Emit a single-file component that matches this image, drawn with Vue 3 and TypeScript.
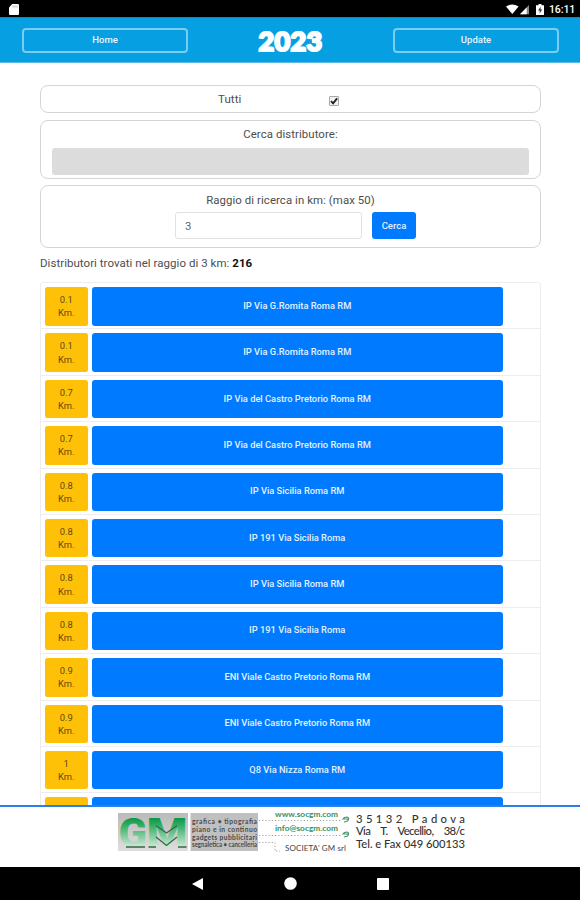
<script setup lang="ts">
import { ref } from 'vue'

interface Station {
  distance: string
  name: string
}

const showAll = ref(true)
const query = ref('')
const radius = ref('3')
const total = 216

const stations: Station[] = [
  { distance: '0.1', name: 'IP Via G.Romita Roma RM' },
  { distance: '0.1', name: 'IP Via G.Romita Roma RM' },
  { distance: '0.7', name: 'IP Via del Castro Pretorio Roma RM' },
  { distance: '0.7', name: 'IP Via del Castro Pretorio Roma RM' },
  { distance: '0.8', name: 'IP Via Sicilia Roma RM' },
  { distance: '0.8', name: 'IP 191 Via Sicilia Roma' },
  { distance: '0.8', name: 'IP Via Sicilia Roma RM' },
  { distance: '0.8', name: 'IP 191 Via Sicilia Roma' },
  { distance: '0.9', name: 'ENI Viale Castro Pretorio Roma RM' },
  { distance: '0.9', name: 'ENI Viale Castro Pretorio Roma RM' },
  { distance: '1', name: 'Q8 Via Nizza Roma RM' },
  { distance: '', name: '' },
]
</script>

<template>
  <div class="screen">
    <div class="status">
      <svg class="sd" viewBox="0 0 10 11" width="10" height="11"><path d="M3.2 0H9.2L10 .8V10.2L9.2 11H.8L0 10.2V3.4Z" fill="#fff" /><path d="M4 1.5v2M6 1.5v2M8 1.5v2" stroke="#999" stroke-width=".8" /></svg>
      <div class="status-right">
        <svg viewBox="0 0 27 11" width="27" height="11">
          <path d="M0 2.6Q6.3-1.8 12.6 2.6L6.3 10Z" fill="#fff" />
          <path d="M14 10.2L23 1V10.2Z" fill="#888" />
          <path d="M14 10.2L20.7 3.4V10.2Z" fill="#fff" />
        </svg>
        <svg class="battery" viewBox="0 0 8 11" width="8" height="11"><path d="M2.5 0h3v1.2H8V11H0V1.2h2.5Z" fill="#fff" /><path d="M4.6 2.7L2 6.5h1.7v2.8L6.2 5.5H4.6Z" fill="#333" /></svg>
        <span class="clock">16:11</span>
      </div>
    </div>

    <header class="header">
      <button class="outline" type="button">Home</button>
      <h1 class="title">2023</h1>
      <button class="outline" type="button">Update</button>
    </header>

    <main class="content">
      <label class="panel all">
        <span class="all-text">Tutti</span>
        <input v-model="showAll" class="native" type="checkbox" />
        <span class="check"><svg v-if="showAll" viewBox="0 0 8 8" width="8" height="8"><path d="M1 4.2L3.1 6.4L7.1 1.3" fill="none" stroke="#222" stroke-width="1.9" /></svg></span>
      </label>

      <section class="panel search">
        <span class="caption">Cerca distributore:</span>
        <input v-model="query" class="query" type="text" disabled />
      </section>

      <section class="panel range">
        <span class="caption">Raggio di ricerca in km: (max 50)</span>
        <div class="range-row">
          <input v-model="radius" class="radius" type="text" />
          <button class="go" type="button">Cerca</button>
        </div>
      </section>

      <p class="found">Distributori trovati nel raggio di 3 km: <b>{{ total }}</b></p>

      <ul class="list">
        <li v-for="(s, i) in stations" :key="i" class="row">
          <div class="km"><template v-if="s.distance"><span>{{ s.distance }}</span><span>Km.</span></template></div>
          <button class="station" type="button">{{ s.name }}</button>
        </li>
      </ul>
    </main>

    <footer class="footer">
      <svg class="banner" viewBox="0 0 352 54" width="352" height="54">
        <defs>
          <linearGradient id="plate" x1="0" y1="0" x2="0" y2="1">
            <stop offset="0" stop-color="#b9bab9" /><stop offset="1" stop-color="#dededc" />
          </linearGradient>
          <linearGradient id="green" gradientUnits="userSpaceOnUse" x1="0" y1="6" x2="0" y2="36">
            <stop offset="0" stop-color="#079344" /><stop offset=".25" stop-color="#2dab5f" /><stop offset="1" stop-color="#cfe9d6" />
          </linearGradient>
        </defs>
        <rect x="0" y="2" width="70" height="38" fill="url(#plate)" />
        <g class="mark">
          <text x="0.5" y="35.5" textLength="28.500" lengthAdjust="spacingAndGlyphs">G</text>
          <text x="28.500" y="35.5" textLength="41" lengthAdjust="spacingAndGlyphs">M</text>
        </g>
        <path d="M38 14.500L48.500 22L59 14.500M38 26L48.500 34.500L59 26" fill="none" stroke="#40604a" stroke-width="1.300" />
        <path d="M8 36H27M30.500 36h7.500M60 36h8.500" fill="none" stroke="#40604a" stroke-width="1.300" />
        <rect x="72.500" y="2" width="67.500" height="38" fill="#bfc0bf" />
        <g class="services">
          <text x="74" y="13" textLength="65">grafica • tipografia</text>
          <text x="74" y="21" textLength="65">piano e in continuo</text>
          <text x="74" y="29" textLength="65">gadgets pubblicitari</text>
          <text x="74" y="36.300" textLength="65" lengthAdjust="spacingAndGlyphs">segnaletica • cancelleria</text>
        </g>
        <path d="M141 9.500H224M141 24.500H224M141 31.500H157V40H162" fill="none" stroke="#858585" stroke-width=".8" stroke-dasharray="1.200 2" />
        <g class="links">
          <text x="157" y="5.800" textLength="63">www.socgm.com</text>
          <text x="157" y="20.300" textLength="63">info@socgm.com</text>
        </g>
        <path d="M230 8H225Q226 6 229 6Q232 7 229.500 10L226 11M230 23H225Q226 21 229 21Q232 22 229.500 25L226 26" fill="none" stroke="#439768" stroke-width="1.200" />
        <text class="company" x="167" y="39.800" textLength="61">SOCIETA' GM srl</text>
        <g class="address">
          <text x="238" y="11.500" textLength="109">35132 Padova</text>
          <text x="238" y="24.300" word-spacing="8" textLength="109">Via T. Vecellio, 38/c</text>
          <text x="238" y="37" textLength="109" lengthAdjust="spacingAndGlyphs">Tel. e Fax 049 600133</text>
        </g>
      </svg>
    </footer>

    <nav class="nav">
      <svg viewBox="0 0 12 12" width="12" height="12"><path d="M12 0V12L1 6Z" fill="#fff" /></svg>
      <svg viewBox="0 0 13 13" width="13" height="13"><circle cx="6.5" cy="6.5" r="6.3" fill="#fff" /></svg>
      <svg viewBox="0 0 12 12" width="12" height="12"><rect width="12" height="12" rx=".8" fill="#fff" /></svg>
    </nav>
  </div>
</template>

<style>
body {
  margin: 0;
  background: #fff;
}
</style>

<style scoped>
* {
  box-sizing: border-box;
}
.screen {
  width: 580px;
  height: 900px;
  display: flex;
  flex-direction: column;
  overflow: hidden;
  background: #fff;
  color: #4d4d4d;
  font-family: Roboto, "Liberation Sans", sans-serif;
}
button,
input {
  font-family: inherit;
  margin: 0;
  padding: 0;
}
.status {
  flex: none;
  height: 17px;
  background: #000;
  display: flex;
  justify-content: space-between;
  align-items: center;
  padding: 1px 5px 0 9px;
  color: #fff;
}
.status-right {
  display: flex;
  align-items: center;
}
.battery {
  margin: 0 5px 0 3px;
}
.clock {
  width: 26px;
  font-size: 10.5px;
  font-weight: 500;
  letter-spacing: -0.1px;
  white-space: nowrap;
}
.header {
  flex: none;
  height: 46px;
  background: #069fe1;
  border-top: 1px solid #1489bd;
  border-bottom: 1px solid #58b9e5;
  display: flex;
  justify-content: space-between;
  align-items: flex-start;
  padding: 10px 21px 0 22px;
}
.outline {
  width: 166px;
  height: 25px;
  border: 2px solid #7ccbf0;
  border-radius: 4px;
  background: transparent;
  color: #e4f5fd;
  font-size: 9.5px;
  font-weight: 500;
  line-height: 20px;
  padding-bottom: 2px;
}
.title {
  margin: 0;
  width: 66px;
  color: #fff;
  font-family: Lato, sans-serif;
  font-size: 27px;
  font-weight: 900;
  line-height: 25px;
  text-align: center;
  letter-spacing: 0.4px;
  -webkit-text-stroke: 2.2px #fff;
}
.content {
  flex: 1;
  min-height: 0;
  overflow: hidden;
  padding: 22px 39px 0 40px;
}
.panel {
  border: 1.5px solid #d5d5d5;
  border-radius: 8px;
}
.all {
  height: 28px;
  display: flex;
  align-items: center;
  padding-left: 177px;
  font-size: 11.5px;
}
.all-text {
  width: 111px;
  margin-top: -1px;
  letter-spacing: 0.1px;
}
.native {
  display: none;
}
.check {
  width: 10px;
  height: 10px;
  margin-top: 4px;
  border: 1px solid #a8a8a8;
  border-radius: 1px;
  background: #f2f2f2;
  display: flex;
}
.caption {
  font-size: 11.4px;
  line-height: 14px;
  letter-spacing: 0.08px;
}
.search {
  height: 58.5px;
  margin-top: 7px;
  padding: 6px 11px 0;
  display: flex;
  flex-direction: column;
  align-items: center;
}
.query {
  width: 100%;
  height: 27px;
  margin-top: 6.5px;
  border: 0;
  border-radius: 3px;
  background: #dcdcdc;
}
.range {
  height: 62.5px;
  margin-top: 6.5px;
  padding: 7px 0 0;
  display: flex;
  flex-direction: column;
  align-items: center;
}
.range-row {
  display: flex;
  gap: 10px;
  margin: 5px 0 0 10px;
}
.radius {
  width: 187px;
  height: 27px;
  border: 1px solid #dfe1e3;
  border-radius: 3px;
  background: #fff;
  padding-left: 9px;
  color: #666;
  font-size: 11.4px;
}
.go {
  width: 44px;
  height: 27px;
  border: 0;
  border-radius: 3px;
  background: #007bff;
  color: #e0efff;
  font-size: 9.5px;
  font-weight: 500;
}
.found {
  margin: 7px 0 0;
  font-size: 11.5px;
  line-height: 16px;
  letter-spacing: 0.04px;
  white-space: nowrap;
}
.found b {
  color: #111;
}
.list {
  list-style: none;
  margin: 11.5px 0 0;
  padding: 0;
  border: 1px solid #ededed;
  border-radius: 3px;
}
.row {
  height: 46.4px;
  display: flex;
  gap: 4px;
  padding: 4px 0 0 4px;
  border-bottom: 1px solid #ededed;
}
.km {
  width: 42.5px;
  height: 38.5px;
  border-radius: 2.5px;
  background: #ffc107;
  display: flex;
  flex-direction: column;
  align-items: center;
  padding-top: 6px;
  color: #5f4a10;
  font-size: 9.4px;
  line-height: 13.3px;
}
.station {
  width: 411.5px;
  height: 38.5px;
  border: 0;
  border-radius: 3px;
  background: #007bff;
  color: #e3f0ff;
  font-size: 9.3px;
  font-weight: 500;
  letter-spacing: 0;
  padding-bottom: 2px;
}
.footer {
  flex: none;
  height: 62px;
  border-top: 2px solid #2b7fe8;
  background: #fff;
  display: flex;
  padding: 4px 0 0 118px;
}
.banner {
  overflow: visible;
}
.mark {
  font-family: Roboto, sans-serif;
  font-weight: 900;
  font-size: 40px;
  fill: url(#green);
}
.services {
  font-family: Lato, sans-serif;
  font-size: 6.7px;
  font-weight: 700;
  fill: #4b4b4b;
}
.links {
  font-family: Lato, sans-serif;
  font-size: 8.3px;
  font-weight: 700;
  fill: #38915f;
}
.company {
  font-family: Lato, sans-serif;
  font-size: 8px;
  fill: #444;
}
.address {
  font-family: Lato, sans-serif;
  font-size: 11.3px;
  font-weight: 500;
  fill: #333;
}
.nav {
  flex: none;
  height: 33px;
  background: #000;
  display: flex;
  justify-content: center;
  align-items: center;
  gap: 80.5px;
}
</style>
